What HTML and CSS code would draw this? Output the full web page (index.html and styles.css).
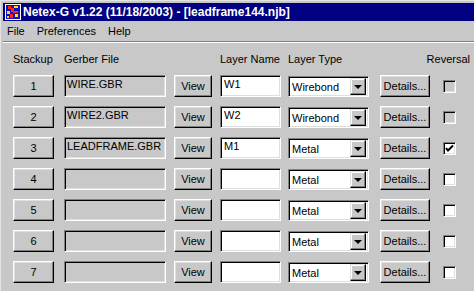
FILE: index.html
```html
<!DOCTYPE html>
<html lang="en">
<head>
  <meta charset="UTF-8" />
  <title>Netex-G</title>
  <link rel="stylesheet" href="styles.css">
</head>
<body>
  <div class="ventana">
    <div class="titulo">
      <svg class="icono" width="16" height="16" viewBox="0 0 16 16">
        <rect x="0" y="0" width="16" height="16" fill="#ffffff"/>
        <rect x="1" y="1" width="14" height="14" fill="#1010c0"/>
        <rect x="3" y="2" width="3" height="3" fill="#ff2020"/>
        <rect x="9" y="2" width="4" height="2" fill="#ffe000"/>
        <rect x="6" y="4" width="3" height="4" fill="#ff2020"/>
        <rect x="2" y="7" width="3" height="3" fill="#ffe000"/>
        <rect x="8" y="7" width="5" height="2" fill="#ff2020"/>
        <rect x="5" y="10" width="3" height="4" fill="#ff2020"/>
        <rect x="10" y="10" width="3" height="3" fill="#ffe000"/>
        <rect x="2" y="12" width="2" height="2" fill="#ffe000"/>
      </svg>
      <span>Netex-G v1.22 (11/18/2003) - [leadframe144.njb]</span>
    </div>

    <div class="menu">
      <span>File</span>
      <span>Preferences</span>
      <span>Help</span>
    </div>
    <div class="linea"></div>

    <div class="tabla">
      <div class="cab">Stackup</div>
      <div class="cab">Gerber File</div>
      <div class="cab"></div>
      <div class="cab">Layer Name</div>
      <div class="cab">Layer Type</div>
      <div class="cab reversal">Reversal</div>

      <!-- fila 1 -->
      <div class="boton num">1</div>
      <div class="archivo">WIRE.GBR</div>
      <div class="boton ver">View</div>
      <div class="campo">W1</div>
      <div class="combo"><span>Wirebond</span><i class="flecha"></i></div>
      <div class="boton detalles">Details...</div>
      <div class="check apagado"></div>

      <!-- fila 2 -->
      <div class="boton num">2</div>
      <div class="archivo">WIRE2.GBR</div>
      <div class="boton ver">View</div>
      <div class="campo">W2</div>
      <div class="combo"><span>Wirebond</span><i class="flecha"></i></div>
      <div class="boton detalles">Details...</div>
      <div class="check apagado"></div>

      <!-- fila 3 -->
      <div class="boton num">3</div>
      <div class="archivo">LEADFRAME.GBR</div>
      <div class="boton ver">View</div>
      <div class="campo">M1</div>
      <div class="combo"><span>Metal</span><i class="flecha"></i></div>
      <div class="boton detalles">Details...</div>
      <div class="check">
        <svg width="9" height="9" viewBox="0 0 9 9"><path d="M1 4 L3 6.5 L8 1.5" fill="none" stroke="#000" stroke-width="2"/></svg>
      </div>

      <!-- fila 4 -->
      <div class="boton num">4</div>
      <div class="archivo"></div>
      <div class="boton ver">View</div>
      <div class="campo"></div>
      <div class="combo"><span>Metal</span><i class="flecha"></i></div>
      <div class="boton detalles">Details...</div>
      <div class="check"></div>

      <!-- fila 5 -->
      <div class="boton num">5</div>
      <div class="archivo"></div>
      <div class="boton ver">View</div>
      <div class="campo"></div>
      <div class="combo"><span>Metal</span><i class="flecha"></i></div>
      <div class="boton detalles">Details...</div>
      <div class="check"></div>

      <!-- fila 6 -->
      <div class="boton num">6</div>
      <div class="archivo"></div>
      <div class="boton ver">View</div>
      <div class="campo"></div>
      <div class="combo"><span>Metal</span><i class="flecha"></i></div>
      <div class="boton detalles">Details...</div>
      <div class="check"></div>

      <!-- fila 7 -->
      <div class="boton num">7</div>
      <div class="archivo"></div>
      <div class="boton ver">View</div>
      <div class="campo"></div>
      <div class="combo"><span>Metal</span><i class="flecha"></i></div>
      <div class="boton detalles">Details...</div>
      <div class="check"></div>
    </div>
  </div>
</body>
</html>
```

FILE: styles.css
```css
body {
  margin: 0;
  background-color: #c8c8c8;
  font-family: "Liberation Sans", Arial, sans-serif;
  font-size: 11px;
  color: #000;
}

.ventana {
  height: 291px;
  padding: 3px 0 0 3px;
  box-sizing: border-box;
  box-shadow: inset 1px 1px 0 #e4e4e4;
  overflow: hidden;
}

.titulo {
  height: 18px;
  background-color: #000080;
  color: white;
  display: flex;
  align-items: center;
  gap: 2px;
  padding-left: 2px;
  font-weight: bold;
  font-size: 12px;
  white-space: nowrap;
}

.icono {
  display: block;
}

.menu {
  height: 19px;
  display: flex;
  align-items: center;
  gap: 12px;
  padding-left: 4px;
}

.linea {
  margin-top: 1px;
  border-top: 1px solid #808080;
  border-bottom: 1px solid #ffffff;
}

.tabla {
  display: grid;
  grid-template-columns: 51px 110px 46px 68px 92px 63px 1fr;
  grid-auto-rows: 22px;
  grid-template-rows: 13px;
  row-gap: 9px;
  padding: 10px 0 0 10px;
}

.tabla .cab:nth-child(1) {
  margin-bottom: 1px;
}

.cab {
  line-height: 13px;
  white-space: nowrap;
}

.reversal {
  grid-column: 6 / 8;
  justify-self: end;
  padding-right: 4px;
}

.tabla > div:nth-child(-n+6) {
  align-self: start;
}

.tabla {
  grid-template-rows: 13px repeat(7, 22px);
  row-gap: 10px 9px;
}

/* botones en relieve */
.boton {
  box-sizing: border-box;
  height: 22px;
  border-top: 1px solid #ffffff;
  border-left: 1px solid #ffffff;
  border-right: 1px solid #000000;
  border-bottom: 1px solid #000000;
  box-shadow: inset -1px -1px 0 #808080, inset 1px 1px 0 #dfdfdf;
  display: flex;
  align-items: center;
  justify-content: center;
  padding-bottom: 1px;
}

.num { width: 41px; }
.ver { width: 38px; }
.detalles { width: 50px; }

/* cajas hundidas */
.archivo,
.campo {
  box-sizing: border-box;
  height: 22px;
  border-top: 1px solid #808080;
  border-left: 1px solid #808080;
  border-right: 1px solid #ffffff;
  border-bottom: 1px solid #ffffff;
  box-shadow: inset 1px 1px 0 #000000, inset -1px -1px 0 #dfdfdf;
  padding: 2px 0 0 2px;
  line-height: 13px;
}

.archivo {
  width: 102px;
}

.campo {
  width: 61px;
  background-color: #fff;
  padding-left: 3px;
}

.combo {
  box-sizing: border-box;
  width: 81px;
  height: 21px;
  margin-top: 1px;
  background-color: #fff;
  border-top: 1px solid #808080;
  border-left: 1px solid #808080;
  border-right: 1px solid #ffffff;
  border-bottom: 1px solid #ffffff;
  box-shadow: inset 1px 1px 0 #000000, inset -1px -1px 0 #dfdfdf;
  display: flex;
  align-items: center;
  justify-content: space-between;
  padding: 2px 2px 2px 3px;
}

.flecha {
  box-sizing: border-box;
  width: 16px;
  height: 17px;
  background-color: #c8c8c8;
  border-top: 1px solid #dfdfdf;
  border-left: 1px solid #dfdfdf;
  border-right: 1px solid #000;
  border-bottom: 1px solid #000;
  box-shadow: inset -1px -1px 0 #808080, inset 1px 1px 0 #fff;
  display: flex;
  align-items: center;
  justify-content: center;
}

.flecha::after {
  content: "";
  border-left: 4px solid transparent;
  border-right: 4px solid transparent;
  border-top: 4px solid #000;
  margin-top: 1px;
}

.check {
  box-sizing: border-box;
  width: 13px;
  height: 13px;
  align-self: center;
  margin-top: 1px;
  background-color: #fff;
  border-top: 1px solid #808080;
  border-left: 1px solid #808080;
  border-right: 1px solid #ffffff;
  border-bottom: 1px solid #ffffff;
  box-shadow: inset 1px 1px 0 #000000, inset -1px -1px 0 #dfdfdf;
  display: flex;
  align-items: center;
  justify-content: center;
}

.check svg {
  display: block;
}

.check.apagado {
  background-color: #c8c8c8;
}
```
